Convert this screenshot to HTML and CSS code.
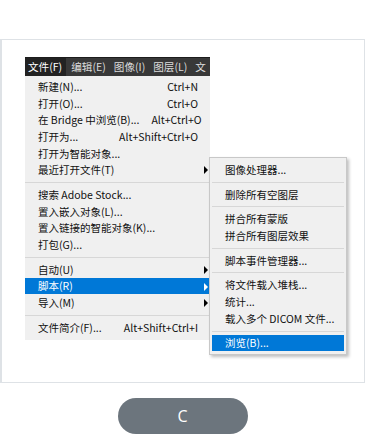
FILE: index.html
```html
<!DOCTYPE html>
<html lang="zh-CN">
<head>
  <meta charset="UTF-8">
  <title>Photoshop 文件菜单</title>
  <link rel="stylesheet" href="styles.css">
</head>
<body>

<div class="frame">
  <div class="shot">
    <div class="menu">
      <div class="menubar">
        <span class="top active">文件(F)</span>
        <span class="top">编辑(E)</span>
        <span class="top">图像(I)</span>
        <span class="top">图层(L)</span>
        <span class="top">文</span>
      </div>
      <div class="list">
        <div class="item"><span>新建(N)...</span><span class="key">Ctrl+N</span></div>
        <div class="item"><span>打开(O)...</span><span class="key">Ctrl+O</span></div>
        <div class="item"><span>在 Bridge 中浏览(B)...</span><span class="key">Alt+Ctrl+O</span></div>
        <div class="item"><span>打开为...</span><span class="key">Alt+Shift+Ctrl+O</span></div>
        <div class="item"><span>打开为智能对象...</span></div>
        <div class="item sub"><span>最近打开文件(T)</span></div>
        <div class="sep"></div>
        <div class="item"><span>搜索 Adobe Stock...</span></div>
        <div class="item"><span>置入嵌入对象(L)...</span></div>
        <div class="item"><span>置入链接的智能对象(K)...</span></div>
        <div class="item"><span>打包(G)...</span></div>
        <div class="sep"></div>
        <div class="item sub"><span>自动(U)</span></div>
        <div class="item sub selected"><span>脚本(R)</span></div>
        <div class="item sub"><span>导入(M)</span></div>
        <div class="sep"></div>
        <div class="item"><span>文件简介(F)...</span><span class="key">Alt+Shift+Ctrl+I</span></div>
      </div>
    </div>

    <div class="submenu">
      <div class="item"><span>图像处理器...</span></div>
      <div class="sep"></div>
      <div class="item"><span>删除所有空图层</span></div>
      <div class="sep"></div>
      <div class="item"><span>拼合所有蒙版</span></div>
      <div class="item"><span>拼合所有图层效果</span></div>
      <div class="sep"></div>
      <div class="item"><span>脚本事件管理器...</span></div>
      <div class="sep"></div>
      <div class="item"><span>将文件载入堆栈...</span></div>
      <div class="item"><span>统计...</span></div>
      <div class="item"><span>载入多个 DICOM 文件...</span></div>
      <div class="sep"></div>
      <div class="item selected"><span>浏览(B)...</span></div>
    </div>
  </div>
</div>

<div class="actions">
  <button class="answer">C</button>
</div>

</body>
</html>
```

FILE: styles.css
```css
body {
  margin: 0;
  font-family: "Noto Sans CJK SC", "Noto Sans", sans-serif;
  background: #ffffff;
}

.frame {
  margin-top: 39px;
  height: 342px;
  border: 1px solid #dee2e6;
  border-left-width: 2px;
}

.shot {
  position: relative;
  padding: 17px 0 0 23px;
}

/* main menu */
.menu {
  width: 185px;
  background: #f0f0f0;
}

.menubar {
  display: flex;
  height: 19px;
  background: #383838;
  border-top: 1px solid #1c1c1c;
  box-sizing: border-box;
  overflow: hidden;
  white-space: nowrap;
}

.top {
  font-size: 10.6px;
  line-height: 18px;
  color: #dcdcdc;
  padding: 0 3px;
  margin-right: 2px;
  flex-shrink: 0;
}

.top.active {
  background: #222222;
  color: #ffffff;
  padding: 0 4px 0 3px;
}

.list {
  padding: 2px 0 4px;
}

.item {
  display: flex;
  justify-content: space-between;
  align-items: center;
  height: 16.7px;
  padding: 0 12px 0 13px;
  font-size: 10.5px;
  color: #111111;
  white-space: nowrap;
  position: relative;
}

.item.sub::after {
  content: "";
  position: absolute;
  right: 2px;
  top: 5px;
  border-left: 4px solid #000;
  border-top: 4px solid transparent;
  border-bottom: 4px solid transparent;
}

.item.selected {
  background: #0078d7;
  color: #ffffff;
}

.item.selected::after {
  border-left-color: #ffffff;
}

.sep {
  height: 1px;
  margin: 4px 0 3px;
  background: #d7d7d7;
}

.key {
  margin-left: 12px;
}

/* submenu flyout */
.submenu {
  position: absolute;
  left: 207px;
  top: 117px;
  width: 132px;
  padding: 3px 2px 3px 2px;
  background: #f0f0f0;
  border: 1px solid #c8c8c8;
  box-shadow: 2px 2px 3px rgba(0, 0, 0, 0.25);
}

.submenu .item {
  padding-left: 13px;
}

.submenu .sep {
  margin: 4px 0 3px;
}

/* answer button */
.actions {
  display: flex;
  justify-content: center;
  padding-top: 15px;
}

.answer {
  width: 130px;
  height: 36px;
  border: none;
  border-radius: 18px;
  background: #6c757d;
  color: #ffffff;
  font-family: "Open Sans", sans-serif;
  font-size: 16px;
}
```
